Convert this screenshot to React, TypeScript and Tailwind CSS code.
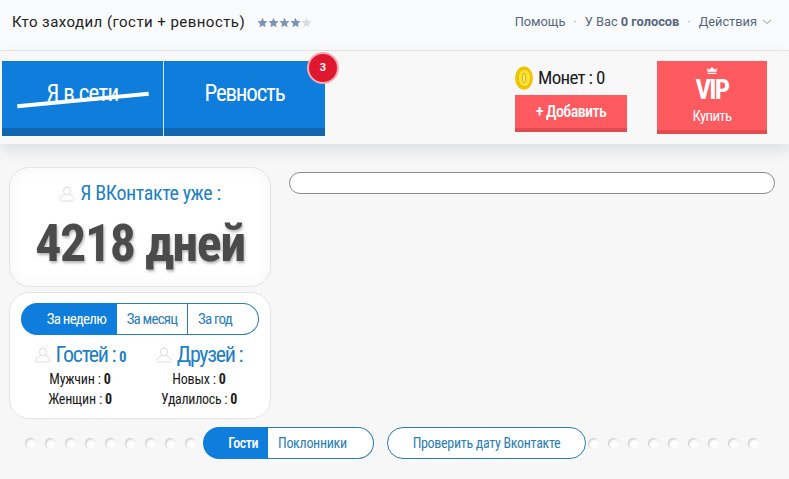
const narrow = "font-['Roboto_Condensed','Liberation_Sans_Narrow','Liberation_Sans',sans-serif]";

function Star({ fill }: { fill: string }) {
  return (
    <svg width="11" height="11" viewBox="0 0 24 24">
      <path fill={fill} d="M12 1.500l3.200 7.200 7.800.8-5.900 5.200 1.700 7.800L12 18.400l-6.800 4.100 1.700-7.800L1 9.500l7.800-.8z" />
    </svg>
  );
}

function User({ size = 16 }: { size?: number }) {
  return (
    <svg width={size} height={size} viewBox="0 0 16 16" fill="none" stroke="#dcdcdc" strokeWidth="1">
      <ellipse cx="8" cy="5" rx="3.500" ry="4" />
      <path d="M5.500 8.500C3.500 9.800 1 10.500 1 13.500c0 1 .5 1.500 1.500 1.500h11c1 0 1.500-.5 1.500-1.500 0-3-2.500-3.700-4.500-5" />
    </svg>
  );
}

function Dot() {
  return <div className="w-[11px] h-[11px] rounded-full bg-[#fdfdfd] shadow-[inset_1px_1px_2px_rgba(0,0,0,0.22)]" />;
}

function Dots({ n = 9 }: { n?: number }) {
  return (
    <div className="flex gap-[9px]">
      {Array.from({ length: n }).map((_, i) => (
        <Dot key={i} />
      ))}
    </div>
  );
}

export default function App() {
  return (
    <div className="w-[789px] h-[479px] overflow-hidden bg-[#f7f7f7] font-['Roboto',sans-serif]">
      <header className="h-[51px] bg-[#fafbfd] border-b border-[#e8e8e8] flex items-center justify-between pl-3 pr-[17px] pb-[6px]">
        <div className="flex items-center gap-3">
          <span className="text-[15px] text-[#222] tracking-[0.45px]">Кто заходил (гости + ревность)</span>
          <div className="flex">
            <Star fill="#7d93b2" />
            <Star fill="#7d93b2" />
            <Star fill="#7d93b2" />
            <Star fill="#7d93b2" />
            <Star fill="#dcdcdc" />
          </div>
        </div>
        <div className="flex items-center text-[12.8px] text-[#55677d]">
          <span>Помощь</span>
          <span className="mx-[8px] text-[#aab]">·</span>
          <span>У Вас <b className="font-bold">0 голосов</b></span>
          <span className="mx-[8px] text-[#aab]">·</span>
          <span>Действия</span>
          <svg width="10" height="6" viewBox="0 0 10 6" fill="none" stroke="#8a9bb0" className="ml-[5px]">
            <path d="M1 1l4 3.500L9 1" />
          </svg>
        </div>
      </header>

      <section className={`h-[93px] bg-[#f8f8f9] flex pl-[2px] pt-[10px] shadow-[0_6px_14px_rgba(120,130,140,0.22)] relative ${narrow}`}>
        <div className="flex h-[75px] text-white text-[23px] relative">
          <div className="relative w-[161px] bg-[#0f7ddb] border-b-[8px] border-[#1166b0] flex items-center justify-center tracking-[-0.7px]">
            <span>Я в сети</span>
            <div className="absolute left-[15px] top-[37px] w-[132px] h-[4px] bg-white rotate-[-5.400deg] origin-center" />
          </div>
          <div className="w-px bg-[#d6e6f5]" />
          <div className="w-[161px] bg-[#0f7ddb] border-b-[8px] border-[#1166b0] flex items-center justify-center tracking-[-1.200px]">
            <span>Ревность</span>
          </div>
          <div className="absolute right-[-14px] top-[-9px] w-[32px] h-[32px] rounded-full bg-[#e0182f] border-2 border-[#f7a9b4] flex items-center justify-center text-[11px] font-bold tracking-normal font-['Roboto',sans-serif]">
            3
          </div>
        </div>

        <div className="ml-[190px] w-[112px] flex flex-col">
          <div className="flex items-center h-[24px] mt-[5px] text-[#1b1b1b] text-[19px] tracking-[-0.7px] gap-[5px]">
            <svg width="18" height="24" viewBox="0 0 18 24">
              <ellipse cx="9" cy="12" rx="9" ry="11.500" fill="#f2c500" />
              <ellipse cx="9.500" cy="12" rx="6.500" ry="9" fill="#ffe22e" stroke="#e8b800" strokeWidth="1" />
              <ellipse cx="9" cy="12" rx="1.500" ry="5" fill="#fff2a0" stroke="#dba90d" strokeWidth="1" />
            </svg>
            <span>Монет : 0</span>
          </div>
          <div className="mt-[5px] h-[37px] bg-[#ff5a5f] border-b-[4px] border-[#e04c50] text-white text-[16px] font-medium tracking-[-0.6px] flex items-center justify-center">
            + Добавить
          </div>
        </div>

        <div className="ml-[30px] w-[110px] h-[73px] bg-[#ff5a5f] border-b-[4px] border-[#e04c50] text-white flex flex-col items-center">
          <svg width="12" height="7" viewBox="0 0 12 8" fill="white" className="mt-[6px]">
            <path d="M0 1l2.500 2L6 0l3.500 3L12 1l-1 4.500H1zM1 6.500h10V8H1z" />
          </svg>
          <span className="text-[27px] leading-[30px] font-bold tracking-[-1.800px] mt-[1px]">VIP</span>
          <span className="text-[15px] leading-[20px] tracking-[-0.7px] mt-[1px]">Купить</span>
        </div>
      </section>

      <main className={`flex pt-[23px] pl-[9px] gap-[18px] ${narrow}`}>
        <div className="w-[262px] flex flex-col gap-[5px]">
          <div className="h-[120px] rounded-[20px] border border-[#e4e4e4] bg-white shadow-[inset_0_0_16px_rgba(0,0,0,0.04)] flex flex-col items-center">
            <div className="flex items-center gap-[5px] text-[#1e7fc4] text-[20px] tracking-[-0.4px] mt-[12px] leading-[27px]">
              <User />
              <span>Я ВКонтакте уже :</span>
            </div>
            <div className="text-[#4b4b4b] text-[52px] tracking-[-1.500px] font-bold leading-[60px] mt-[7px] [text-shadow:1px_2px_3px_rgba(0,0,0,0.3)]">
              4218 дней
            </div>
          </div>

          <div className="h-[127px] rounded-[20px] border border-[#e4e4e4] bg-white pt-[10px] px-[11px]">
            <div className="flex h-[32px] text-[15px] tracking-[-0.8px] w-[238px]">
              <div className="w-[96px] bg-[#0f7ddb] rounded-l-full text-white flex items-center justify-end pr-[11px]">За неделю</div>
              <div className="w-[71px] border-y border-r border-[#2a7db5] text-[#2a7db5] flex items-center justify-center">За месяц</div>
              <div className="flex-1 border-y border-r border-[#2a7db5] rounded-r-full text-[#2a7db5] flex items-center pl-[10px]">За год</div>
            </div>
            <div className="flex mt-[7px] text-[#1b1b1b] text-[14px] tracking-[-0.2px]">
              <div className="w-[118px] flex flex-col items-center">
                <div className="flex items-center gap-[5px] text-[#1e7fc4] text-[22px] tracking-[-1.300px] leading-[26px]">
                  <User />
                  <span>Гостей : <b className="text-[15px] leading-none">0</b></span>
                </div>
                <div className="mt-[1px] leading-[20px]">Мужчин : <b>0</b></div>
                <div className="leading-[20px]">Женщин : <b>0</b></div>
              </div>
              <div className="flex-1 flex flex-col items-center">
                <div className="flex items-center gap-[5px] text-[#1e7fc4] text-[22px] tracking-[-1.300px] leading-[26px]">
                  <User />
                  <span>Друзей :</span>
                </div>
                <div className="mt-[1px] leading-[20px]">Новых : <b>0</b></div>
                <div className="leading-[20px] tracking-[-0.3px]">Удалилось : <b>0</b></div>
              </div>
            </div>
          </div>
        </div>
        <div className="w-[486px] h-[22px] mt-[5px] rounded-full border border-[#8c8c8c] bg-white" />
      </main>

      <div className={`flex items-center pl-[25px] mt-[8px] text-[14px] tracking-[-0.3px] ${narrow}`}>
        <Dots />
        <div className="flex h-[32px] w-[171px] ml-[7px]">
          <div className="w-[65px] bg-[#0f7ddb] rounded-l-full text-white font-medium tracking-[-0.5px] flex items-center justify-end pr-[10px]">Гости</div>
          <div className="flex-1 bg-white border border-l-0 border-[#2a7db5] rounded-r-full text-[#2a7db5] flex items-center pl-[10px]">Поклонники</div>
        </div>
        <div className="ml-[13px] h-[32px] w-[199px] rounded-full bg-white border border-[#2a7db5] text-[#2a7db5] flex items-center justify-center">Проверить дату Вконтакте</div>
        <div className="ml-[2px]">
          <Dots />
        </div>
      </div>
    </div>
  );
}
